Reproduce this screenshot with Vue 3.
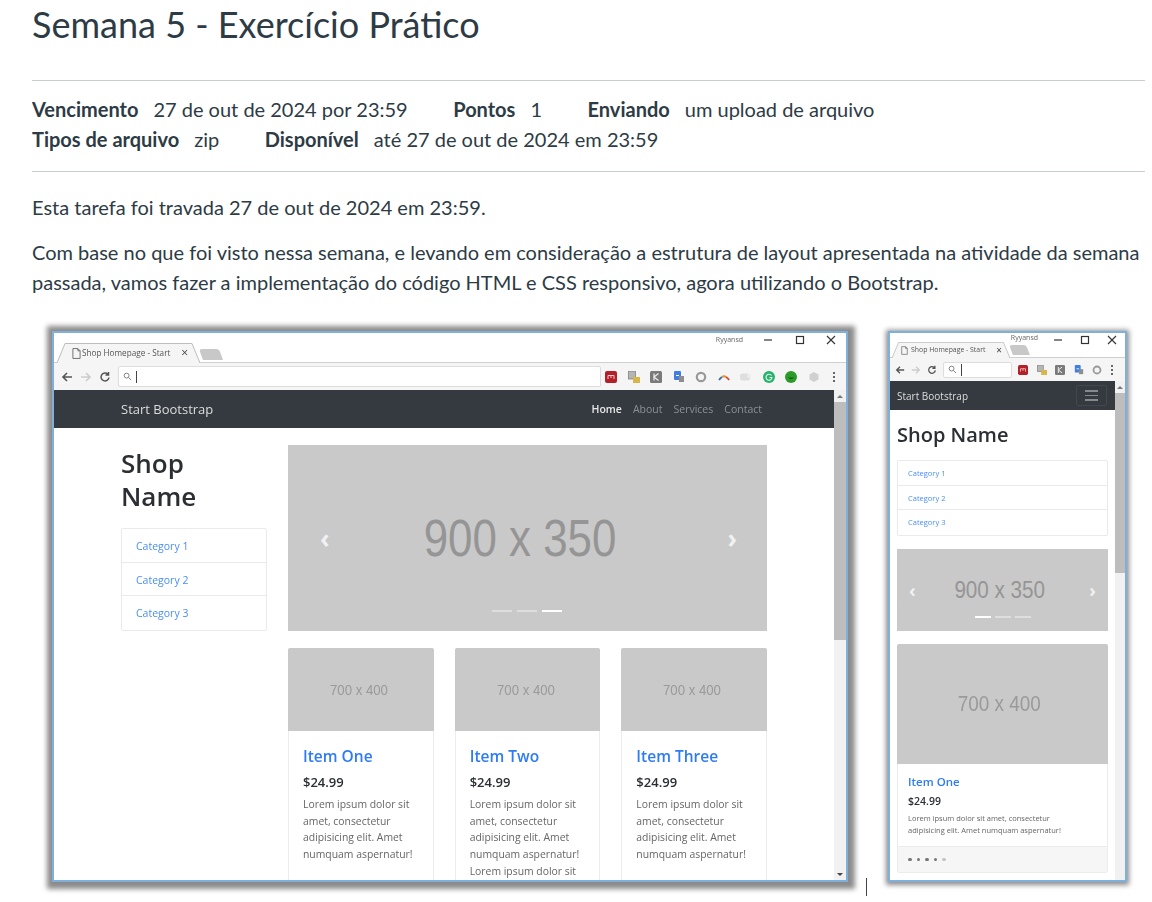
<template>
  <div class="page">
    <h1 class="title">Semana 5 - Exercício Prático</h1>

    <div class="details">
      <div class="details-row">
        <span class="detail"><b>Vencimento</b>27 de out de 2024 por 23:59</span>
        <span class="detail"><b>Pontos</b>1</span>
        <span class="detail"><b>Enviando</b>um upload de arquivo</span>
      </div>
      <div class="details-row">
        <span class="detail"><b>Tipos de arquivo</b>zip</span>
        <span class="detail"><b>Disponível</b>até 27 de out de 2024 em 23:59</span>
      </div>
    </div>

    <p class="lock">Esta tarefa foi travada 27 de out de 2024 em 23:59.</p>
    <p class="desc">
      Com base no que foi visto nessa semana, e levando em consideração a estrutura de layout apresentada na atividade da semana
      passada, vamos fazer a implementação do código HTML e CSS responsivo, agora utilizando o Bootstrap.
    </p>

    <div class="shots">
      <!-- desktop -->
      <div class="win win-lg">
        <div class="win-inner">
          <div class="tabbar">
            <div class="tab">
              <svg class="tab-shape" viewBox="0 0 143 20" preserveAspectRatio="none"><path d="M0 20 8 .5H135L143 20" fill="#f5f5f5" stroke="#bdbdbd" /></svg>
              <svg class="doc" viewBox="0 0 10 12"><path d="M1 .5h5.500L9 3v8.500H1z M6.500.5V3H9" fill="none" stroke="#666" /></svg>
              <span class="tab-label">Shop Homepage - Start</span>
              <span class="tab-x">×</span>
            </div>
            <div class="newtab"></div>
            <span class="user">Ryyansd</span>
            <div class="controls">
              <svg viewBox="0 0 10 10"><path d="M1 5h8" stroke="#333" stroke-width="1.200" /></svg>
              <svg viewBox="0 0 10 10"><rect x="1.500" y="1.500" width="7" height="7" fill="none" stroke="#333" stroke-width="1.200" /></svg>
              <svg viewBox="0 0 10 10"><path d="M1 1l8 8M9 1l-8 8" stroke="#333" stroke-width="1.100" /></svg>
            </div>
          </div>
          <div class="toolbar">
            <svg class="nav-ic" viewBox="0 0 12 12"><path d="M11 6H2M6 2 2 6l4 4" fill="none" stroke="#555" stroke-width="1.600" /></svg>
            <svg class="nav-ic" viewBox="0 0 12 12"><path d="M1 6h9M6 2l4 4-4 4" fill="none" stroke="#ccc" stroke-width="1.600" /></svg>
            <svg class="nav-ic" viewBox="0 0 12 12"><path d="M10 6.500A4 4 0 1 1 8.800 3M9.500 1v3h-3" fill="none" stroke="#555" stroke-width="1.500" /></svg>
            <div class="omnibox">
              <svg class="search" viewBox="0 0 10 10"><circle cx="4" cy="4" r="2.700" fill="none" stroke="#777" /><path d="M6 6l3 3" stroke="#777" /></svg>
              <i class="caret"></i>
            </div>
            <div class="exts">
              <svg class="ext" viewBox="0 0 12 12"><rect width="12" height="12" rx="2" fill="#b3202a" /><path d="M3 8V4.500h6V8M6 4.500V7" fill="none" stroke="#f3c9c9" /></svg>
              <svg class="ext" viewBox="0 0 12 12"><rect x=".5" y="0" width="7" height="8" fill="#b5b5b5" stroke="#666" stroke-width=".6" /><rect x="5" y="6" width="7" height="6" fill="#d8b64a" /></svg>
              <svg class="ext" viewBox="0 0 12 12"><rect width="12" height="12" rx="1.500" fill="#7a7a7a" /><path d="M4 2.500v7M8.500 2.500 4 6l4.500 3.500" fill="none" stroke="#eee" stroke-width="1.200" /></svg>
              <svg class="ext" viewBox="0 0 12 12"><rect x="1" width="7" height="9" rx="1" fill="#3f7fe0" /><rect x="6" y="5" width="5" height="6" fill="#8d8d8d" /><path d="M3 4.500h3" stroke="#fff" /></svg>
              <svg class="ext" viewBox="0 0 12 12"><circle cx="6" cy="6" r="4.200" fill="none" stroke="#999" stroke-width="2.200" /></svg>
              <svg class="ext" viewBox="0 0 12 12"><path d="M1 9q1.500-2 3-3" fill="none" stroke="#3a6fb5" stroke-width="1.800" /><path d="M4 6q2-1.500 4 0" fill="none" stroke="#e0902b" stroke-width="1.800" /><path d="M8 6q2 1 3 3" fill="none" stroke="#d9402b" stroke-width="1.800" /></svg>
              <svg class="ext" viewBox="0 0 12 12"><rect y="2.500" width="10" height="7" rx="2.500" fill="#dedede" /><circle cx="9" cy="5" r="2" fill="#ececec" /></svg>
              <svg class="ext" viewBox="0 0 12 12"><circle cx="6" cy="6" r="6" fill="#27b36b" /><path d="M8.500 4.500A3 3 0 1 0 9 6.500H6.500" fill="none" stroke="#e9fbf1" stroke-width="1.100" /></svg>
              <svg class="ext" viewBox="0 0 12 12"><circle cx="6" cy="6" r="6" fill="#2a9a2a" /><path d="M3 6.500q3 3 6 0" fill="#0f5e0f" /></svg>
              <svg class="ext" viewBox="0 0 12 12"><path d="M6 1l4.500 2.500v5L6 11 1.500 8.500v-5z" fill="#d0d0d0" /></svg>
              <i class="dots"></i>
            </div>
          </div>

          <div class="viewport">
            <div class="site">
              <nav class="navbar">
                <span class="brand">Start Bootstrap</span>
                <div class="links">
                  <a v-for="l in links" :key="l" :class="{ on: l === 'Home' }">{{ l }}</a>
                </div>
              </nav>
              <div class="site-body">
                <aside class="side">
                  <h2 class="shop">Shop<br />Name</h2>
                  <div class="list">
                    <a v-for="c in cats" :key="c">{{ c }}</a>
                  </div>
                </aside>
                <main class="main">
                  <div class="carousel">
                    <span class="arrow">‹</span>
                    <span class="ph">900 x 350</span>
                    <span class="arrow">›</span>
                    <div class="ind"><i></i><i></i><i class="on"></i></div>
                  </div>
                  <div class="cards">
                    <div v-for="item in items" :key="item.name" class="card">
                      <div class="thumb"><span>700 x 400</span></div>
                      <div class="card-body">
                        <h4>{{ item.name }}</h4>
                        <h5>$24.99</h5>
                        <p>{{ item.text }}</p>
                      </div>
                    </div>
                  </div>
                </main>
              </div>
            </div>
            <div class="scroll">
              <span class="up"></span>
              <span class="thumb-bar"></span>
              <span class="down"></span>
            </div>
          </div>
        </div>
      </div>

      <i class="cursor"></i>

      <!-- mobile -->
      <div class="win win-sm">
        <div class="win-inner">
          <div class="tabbar">
            <div class="tab">
              <svg class="tab-shape" viewBox="0 0 143 20" preserveAspectRatio="none"><path d="M0 20 8 .5H135L143 20" fill="#f5f5f5" stroke="#bdbdbd" /></svg>
              <svg class="doc" viewBox="0 0 10 12"><path d="M1 .5h5.500L9 3v8.500H1z M6.500.5V3H9" fill="none" stroke="#666" /></svg>
              <span class="tab-label">Shop Homepage - Start</span>
              <span class="tab-x">×</span>
            </div>
            <div class="newtab"></div>
            <span class="user">Ryyansd</span>
            <div class="controls">
              <svg viewBox="0 0 10 10"><path d="M1 5h8" stroke="#333" stroke-width="1.200" /></svg>
              <svg viewBox="0 0 10 10"><rect x="1.500" y="1.500" width="7" height="7" fill="none" stroke="#333" stroke-width="1.200" /></svg>
              <svg viewBox="0 0 10 10"><path d="M1 1l8 8M9 1l-8 8" stroke="#333" stroke-width="1.100" /></svg>
            </div>
          </div>
          <div class="toolbar">
            <svg class="nav-ic" viewBox="0 0 12 12"><path d="M11 6H2M6 2 2 6l4 4" fill="none" stroke="#555" stroke-width="1.600" /></svg>
            <svg class="nav-ic" viewBox="0 0 12 12"><path d="M1 6h9M6 2l4 4-4 4" fill="none" stroke="#ccc" stroke-width="1.600" /></svg>
            <svg class="nav-ic" viewBox="0 0 12 12"><path d="M10 6.500A4 4 0 1 1 8.800 3M9.500 1v3h-3" fill="none" stroke="#555" stroke-width="1.500" /></svg>
            <div class="omnibox">
              <svg class="search" viewBox="0 0 10 10"><circle cx="4" cy="4" r="2.700" fill="none" stroke="#777" /><path d="M6 6l3 3" stroke="#777" /></svg>
              <i class="caret"></i>
            </div>
            <div class="exts">
              <svg class="ext" viewBox="0 0 12 12"><rect width="12" height="12" rx="2" fill="#b3202a" /><path d="M3 8V4.500h6V8M6 4.500V7" fill="none" stroke="#f3c9c9" /></svg>
              <svg class="ext" viewBox="0 0 12 12"><rect x=".5" y="0" width="7" height="8" fill="#b5b5b5" stroke="#666" stroke-width=".6" /><rect x="5" y="6" width="7" height="6" fill="#d8b64a" /></svg>
              <svg class="ext" viewBox="0 0 12 12"><rect width="12" height="12" rx="1.500" fill="#7a7a7a" /><path d="M4 2.500v7M8.500 2.500 4 6l4.500 3.500" fill="none" stroke="#eee" stroke-width="1.200" /></svg>
              <svg class="ext" viewBox="0 0 12 12"><rect x="1" width="7" height="9" rx="1" fill="#3f7fe0" /><rect x="6" y="5" width="5" height="6" fill="#8d8d8d" /><path d="M3 4.500h3" stroke="#fff" /></svg>
              <svg class="ext" viewBox="0 0 12 12"><circle cx="6" cy="6" r="4.200" fill="none" stroke="#999" stroke-width="2.200" /></svg>
              <i class="dots"></i>
            </div>
          </div>

          <div class="viewport">
            <div class="site">
              <nav class="navbar">
                <span class="brand">Start Bootstrap</span>
                <span class="burger"><i></i><i></i><i></i></span>
              </nav>
              <div class="m-body">
                <h2 class="shop">Shop Name</h2>
                <div class="list">
                  <a v-for="c in cats" :key="c">{{ c }}</a>
                </div>
                <div class="carousel">
                  <span class="arrow">‹</span>
                  <span class="ph">900 x 350</span>
                  <span class="arrow">›</span>
                  <div class="ind"><i class="on"></i><i></i><i></i></div>
                </div>
                <div class="card">
                  <div class="thumb"><span>700 x 400</span></div>
                  <div class="card-body">
                    <h4>Item One</h4>
                    <h5>$24.99</h5>
                    <p>{{ lorem }}</p>
                  </div>
                  <div class="card-foot"><i></i><i></i><i></i><i></i><i class="off"></i></div>
                </div>
              </div>
            </div>
            <div class="scroll">
              <span class="up"></span>
              <span class="thumb-bar"></span>
            </div>
          </div>
        </div>
      </div>
    </div>
  </div>
</template>

<script setup>
const links = ['Home', 'About', 'Services', 'Contact']
const cats = ['Category 1', 'Category 2', 'Category 3']
const lorem = 'Lorem ipsum dolor sit amet, consectetur adipisicing elit. Amet numquam aspernatur!'
const items = [
  { name: 'Item One', text: lorem },
  { name: 'Item Two', text: lorem + ' Lorem ipsum dolor sit' },
  { name: 'Item Three', text: lorem },
]
</script>

<style>
html, body {
  background: #fff;
  overflow: hidden;
}
</style>

<style scoped>
.page {
  width: 1113px;
  height: 902px;
  overflow: hidden;
  margin-left: 32px;
  font-family: Lato, "Liberation Sans", sans-serif;
  color: #2d3b45;
  font-size: 20px;
  line-height: 30px;
}
.title {
  margin: 3px 0 0;
  padding-bottom: 34px;
  font-size: 36px;
  line-height: 43px;
  font-weight: 400;
  border-bottom: 1px solid #c7cdd1;
}
.details {
  padding: 13px 0 17px;
  border-bottom: 1px solid #c7cdd1;
}
.details-row {
  display: flex;
  gap: 45.500px;
}
.detail b {
  margin-right: 15px;
  font-weight: 700;
}
.lock {
  margin: 20px 0 0;
}
.desc {
  margin: 15px 0 0;
}
.shots {
  display: flex;
  align-items: flex-start;
  margin-top: 34px;
  padding-left: 20px;
  font-family: "Open Sans", "Noto Sans", sans-serif;
}
.win {
  flex: none;
  box-sizing: border-box;
  height: 551px;
  background: #fff;
  border: 2px solid #7fb0dc;
  overflow: hidden;
}
.win-inner {
  height: 100%;
  display: flex;
  flex-direction: column;
  filter: blur(0.4px);
}
.win-lg {
  width: 796px;
  box-shadow: 1px 1px 5px 6px #8c8c8c;
}
.win-sm {
  width: 239px;
  box-shadow: 0 1px 5px 2px #8c8c8c;
}
.cursor {
  flex: none;
  width: 1px;
  height: 18px;
  margin: 547px 21px 0 18px;
  background: #444;
}

/* browser chrome */
.tabbar {
  position: relative;
  flex: none;
  height: 30px;
  display: flex;
  align-items: flex-end;
  padding-left: 3px;
  box-sizing: border-box;
  border-bottom: 1px solid #cfcfcf;
}
.tab {
  position: relative;
  width: 143px;
  height: 20px;
  margin-bottom: -1px;
  display: flex;
  align-items: center;
  gap: 1px;
  padding-left: 15px;
  box-sizing: border-box;
  color: #555;
  font-size: 8.200px;
  line-height: 1;
  white-space: nowrap;
}
.tab-shape {
  position: absolute;
  inset: 0;
  width: 100%;
  height: 100%;
}
.doc, .tab-label, .tab-x {
  position: relative;
}
.doc {
  width: 9px;
  height: 11px;
  flex: none;
}
.tab-label {
  flex: 1;
}
.tab-x {
  font-size: 12px;
  margin-right: 12px;
  color: #444;
}
.newtab {
  width: 20px;
  height: 11px;
  margin: 0 0 2px 1px;
  background: #c8c8c8;
  border-radius: 3px 3px 0 0;
  transform: skewX(20deg);
}
.user {
  position: absolute;
  right: 103px;
  top: 2px;
  font-size: 7px;
  line-height: 10px;
  color: #666;
  filter: blur(0.5px);
}
.controls {
  position: absolute;
  right: 10px;
  top: 2px;
  display: flex;
  gap: 21.500px;
}
.controls svg {
  width: 10px;
  height: 10px;
}
.toolbar {
  flex: none;
  height: 27px;
  display: flex;
  align-items: center;
  gap: 7px;
  padding: 0 11px 0 7px;
  background: #f5f5f5;
  box-sizing: border-box;
}
.nav-ic {
  width: 12px;
  height: 12px;
  flex: none;
}
.omnibox {
  flex: 1;
  height: 19px;
  display: flex;
  align-items: center;
  gap: 4px;
  padding-left: 4px;
  background: #fff;
  border: 1px solid #ddd;
  border-radius: 2px;
}
.search {
  width: 9px;
  height: 9px;
}
.caret {
  width: 1px;
  height: 12px;
  background: #444;
}
.exts {
  flex: none;
  display: flex;
  align-items: center;
  gap: 10.500px;
  margin-left: -3px;
}
.ext {
  width: 12px;
  height: 12px;
  flex: none;
}
.dots {
  width: 2px;
  height: 2px;
  margin-left: 3px;
  background: #666;
  box-shadow: 0 -4px #666, 0 4px #666;
}

/* page inside the window */
.viewport {
  flex: 1;
  min-height: 0;
  display: flex;
  overflow: hidden;
}
.site {
  flex: 1;
  min-width: 0;
  overflow: hidden;
}
.navbar {
  height: 38px;
  display: flex;
  align-items: center;
  justify-content: space-between;
  padding: 0 72px 0 67px;
  background: #343a40;
  box-sizing: border-box;
}
.brand {
  color: #ddd;
  font-size: 13px;
}
.links {
  display: flex;
  gap: 11px;
  font-size: 10.500px;
  color: #8c9094;
}
.links .on {
  color: #e6e6e6;
  font-weight: 600;
}
.site-body {
  display: flex;
  gap: 21px;
  padding: 17px 67px 0;
}
.side {
  width: 146px;
  flex: none;
}
.shop {
  margin: 0;
  color: #2b2f33;
  font-size: 26px;
  line-height: 33px;
  font-weight: 600;
}
.side .shop {
  margin-top: 2px;
}
.list {
  margin-top: 15px;
  border: 1px solid #eaeaea;
  border-radius: 2px;
}
.list a {
  display: block;
  height: 33.700px;
  box-sizing: border-box;
  padding: 1px 0 0 14px;
  line-height: 33px;
  font-size: 10.500px;
  color: #4a8ef5;
  border-bottom: 1px solid #eaeaea;
}
.list a:last-child {
  border-bottom: 0;
}
.main {
  flex: 1;
  min-width: 0;
}
.carousel {
  position: relative;
  height: 186px;
  display: flex;
  align-items: center;
  justify-content: space-between;
  padding: 0 30px 0 32px;
  background: #c9c9c9;
}
.ph {
  font-family: "Liberation Sans", sans-serif;
  font-size: 51px;
  line-height: 1;
  color: #959595;
  transform: translateX(-8px) scaleX(0.86);
}
.arrow {
  color: #f1f1f1;
  font-size: 26px;
  font-weight: 700;
  line-height: 1;
}
.ind {
  position: absolute;
  left: 204px;
  bottom: 19px;
  display: flex;
  gap: 5px;
}
.ind i {
  width: 20px;
  height: 2px;
  background: #dedede;
}
.ind .on {
  background: #fff;
}
.cards {
  display: flex;
  gap: 21px;
  margin-top: 17px;
}
.card {
  flex: 1;
  min-width: 0;
  border: 1px solid #ececec;
  border-radius: 2px;
}
.thumb {
  height: 83px;
  margin: -1px;
  display: flex;
  align-items: center;
  justify-content: center;
  background: #c9c9c9;
  border-radius: 2px 2px 0 0;
  color: #9a9a9a;
  font-family: "Liberation Sans", sans-serif;
  font-size: 15px;
}
.thumb span {
  transform: translateX(-2px) scaleX(0.88);
}
.card-body {
  padding: 16px 12px 20px 14px;
}
.card h4 {
  margin: 0;
  color: #2d7cf6;
  font-size: 15.500px;
  line-height: 20px;
  font-weight: 600;
}
.card h5 {
  margin: 7px 0 0;
  color: #2b2f33;
  font-size: 13px;
  line-height: 18px;
  font-weight: 600;
}
.card p {
  margin: 5px 0 0;
  color: #666;
  font-size: 10.400px;
  line-height: 16.700px;
}

/* mobile window */
.win-sm .tabbar {
  height: 25px;
  padding-left: 2px;
}
.win-sm .tab {
  width: 118px;
  height: 16px;
  font-size: 6.900px;
  padding-left: 9px;
  gap: 3px;
}
.win-sm .doc {
  width: 7px;
  height: 9px;
}
.win-sm .tab-x {
  margin-right: 8px;
  font-size: 10px;
}
.win-sm .newtab {
  width: 17px;
  height: 10px;
}
.win-sm .user {
  right: 87px;
  top: 0;
}
.win-sm .controls {
  right: 8px;
  gap: 17px;
}
.win-sm .toolbar {
  height: 23px;
  gap: 6px;
  padding: 0 5px;
}
.win-sm .nav-ic {
  width: 10px;
  height: 10px;
}
.win-sm .omnibox {
  height: 14px;
  flex: none;
  width: 63px;
}
.win-sm .exts {
  gap: 8.500px;
  margin-left: 0;
}
.win-sm .ext {
  width: 10px;
  height: 10px;
}
.win-sm .dots {
  margin-left: 0;
}
.win-sm .navbar {
  height: 29px;
  padding: 0 8px 0 7px;
}
.win-sm .brand {
  font-size: 10px;
}
.burger {
  width: 29px;
  height: 19px;
  display: flex;
  flex-direction: column;
  align-items: center;
  justify-content: center;
  gap: 3px;
  border: 1px solid #42484e;
  border-radius: 2px;
}
.burger i {
  width: 13px;
  height: 1.500px;
  background: #868a8e;
}
.m-body {
  padding: 12px 7px 0;
}
.m-body .shop {
  font-size: 20px;
  line-height: 26px;
}
.m-body .list {
  margin-top: 12px;
}
.m-body .list a {
  height: 24.700px;
  padding-top: 0;
  line-height: 24px;
  font-size: 7.500px;
  padding-left: 10px;
}
.m-body .carousel {
  height: 82px;
  margin-top: 13px;
  padding: 0 12px;
}
.m-body .ph {
  font-size: 24px;
  transform: translateX(-3px) scaleX(0.86);
}
.m-body .arrow {
  font-size: 18px;
}
.m-body .ind {
  left: 78px;
  bottom: 13px;
  gap: 4px;
}
.m-body .ind i {
  width: 16px;
}
.m-body .card {
  margin-top: 13px;
}
.m-body .thumb {
  height: 120px;
  font-size: 22px;
}
.m-body .thumb span {
  transform: translateX(-3px) scaleX(0.86);
}
.m-body .card-body {
  padding: 11px 20px 10px 10px;
}
.m-body .card h4 {
  font-size: 11.500px;
  line-height: 16px;
}
.m-body .card h5 {
  margin-top: 4px;
  font-size: 10.500px;
  line-height: 14px;
}
.m-body .card p {
  margin-top: 4px;
  font-size: 7.500px;
  line-height: 12px;
}
.card-foot {
  height: 25px;
  display: flex;
  align-items: center;
  gap: 5px;
  padding-left: 10px;
  background: #f6f6f6;
  border-top: 1px solid #ececec;
}
.card-foot i {
  width: 3.500px;
  height: 3.500px;
  border-radius: 50%;
  background: #777;
}
.card-foot .off {
  background: #c4c4c4;
}

/* scrollbar */
.scroll {
  width: 12px;
  flex: none;
  display: flex;
  flex-direction: column;
  align-items: stretch;
  background: #f1f1f1;
}
.up, .down {
  height: 12px;
  position: relative;
  flex: none;
}
.up::after, .down::after {
  content: "";
  position: absolute;
  left: 3px;
  border: 3px solid transparent;
}
.up::after {
  top: 2px;
  border-bottom-color: #777;
}
.down::after {
  top: 5px;
  border-top-color: #444;
}
.thumb-bar {
  height: 238px;
  background: #bdbdbd;
}
.win-lg .down {
  margin-top: auto;
}
.win-sm .scroll {
  width: 10px;
}
.win-sm .thumb-bar {
  height: 180px;
}
.win-sm .up::after {
  left: 2px;
}
</style>
